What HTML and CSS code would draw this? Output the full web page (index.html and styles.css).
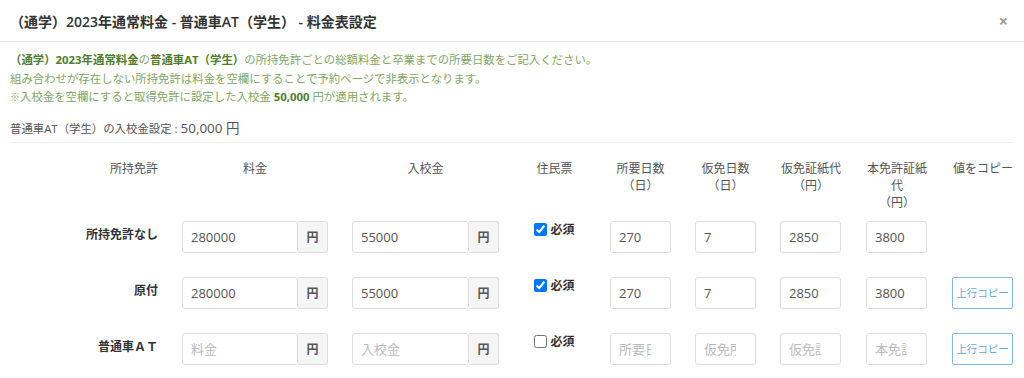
FILE: index.html
```html
<!DOCTYPE html>
<html lang="ja">
<head>
    <meta charset="UTF-8">
    <meta name="viewport" content="width=device-width, initial-scale=1.0">
    <title>料金表設定</title>
    <link rel="stylesheet" href="styles.css">
</head>
<body>
    <div class="modal">
        <div class="modal-header">
            <h4 class="modal-title">（通学）2023年通常料金 - 普通車AT（学生） - 料金表設定</h4>
            <span class="close">×</span>
        </div>

        <div class="modal-body">
            <p class="note">
                <strong>（通学）2023年通常料金</strong>の<strong>普通車AT（学生）</strong>の所持免許ごとの総額料金と卒業までの所要日数をご記入ください。<br>
                組み合わせが存在しない所持免許は料金を空欄にすることで予約ページで非表示となります。<br>
                <span class="kome">※</span>入校金を空欄にすると取得免許に設定した入校金 <strong>50,000</strong> 円が適用されます。
            </p>

            <div class="entry-fee">普通車AT（学生）の入校金設定 : <span class="amount">50,000 円</span></div>

            <table class="fee-table">
                <colgroup>
                    <col style="width: 160px">
                    <col style="width: 170px">
                    <col style="width: 171px">
                    <col style="width: 87px">
                    <col style="width: 85px">
                    <col style="width: 85px">
                    <col style="width: 86px">
                    <col style="width: 86px">
                    <col style="width: 74px">
                </colgroup>
                <thead>
                    <tr>
                        <th class="label-col">所持免許</th>
                        <th>料金</th>
                        <th>入校金</th>
                        <th>住民票</th>
                        <th>所要日数<br>（日）</th>
                        <th>仮免日数<br>（日）</th>
                        <th>仮免証紙代<br>（円）</th>
                        <th>本免許証紙代<br>（円）</th>
                        <th class="last">値をコピー</th>
                    </tr>
                </thead>
                <tbody>
                    <tr>
                        <td class="label-col"><div class="row-label">所持免許なし</div></td>
                        <td><div class="input-group"><input type="text" value="280000" placeholder="料金"><span class="addon">円</span></div></td>
                        <td><div class="input-group"><input type="text" value="55000" placeholder="入校金"><span class="addon">円</span></div></td>
                        <td class="center"><label class="check"><input type="checkbox" checked> 必須</label></td>
                        <td><input type="text" class="small" value="270" placeholder="所要日数"></td>
                        <td><input type="text" class="small" value="7" placeholder="仮免所要日数"></td>
                        <td><input type="text" class="small" value="2850" placeholder="仮免証紙代"></td>
                        <td><input type="text" class="small" value="3800" placeholder="本免証紙代"></td>
                        <td class="last"></td>
                    </tr>
                    <tr>
                        <td class="label-col"><div class="row-label">原付</div></td>
                        <td><div class="input-group"><input type="text" value="280000" placeholder="料金"><span class="addon">円</span></div></td>
                        <td><div class="input-group"><input type="text" value="55000" placeholder="入校金"><span class="addon">円</span></div></td>
                        <td class="center"><label class="check"><input type="checkbox" checked> 必須</label></td>
                        <td><input type="text" class="small" value="270" placeholder="所要日数"></td>
                        <td><input type="text" class="small" value="7" placeholder="仮免所要日数"></td>
                        <td><input type="text" class="small" value="2850" placeholder="仮免証紙代"></td>
                        <td><input type="text" class="small" value="3800" placeholder="本免証紙代"></td>
                        <td class="last"><button type="button" class="copy-btn">上行コピー</button></td>
                    </tr>
                    <tr>
                        <td class="label-col"><div class="row-label">普通車ＡＴ</div></td>
                        <td><div class="input-group"><input type="text" placeholder="料金"><span class="addon">円</span></div></td>
                        <td><div class="input-group"><input type="text" placeholder="入校金"><span class="addon">円</span></div></td>
                        <td class="center"><label class="check"><input type="checkbox"> 必須</label></td>
                        <td><input type="text" class="small" placeholder="所要日数"></td>
                        <td><input type="text" class="small" placeholder="仮免所要日数"></td>
                        <td><input type="text" class="small" placeholder="仮免証紙代"></td>
                        <td><input type="text" class="small" placeholder="本免証紙代"></td>
                        <td class="last"><button type="button" class="copy-btn">上行コピー</button></td>
                    </tr>
                </tbody>
            </table>
        </div>
    </div>
</body>
</html>
```

FILE: styles.css
```css
body {
    margin: 0;
    font-family: "Open Sans", "Noto Sans CJK JP", sans-serif;
    font-size: 12px;
    color: #333;
    background-color: white;
}

.modal {
    width: 1024px;
    overflow: hidden;
}

.modal-header {
    display: flex;
    align-items: center;
    justify-content: space-between;
    height: 42px;
    padding: 0 16px 0 10px;
    border-bottom: 1px solid #e9e9e9;
    box-sizing: border-box;
}

.modal-title {
    margin: 0;
    font-size: 14px;
    font-weight: 600;
    color: #333;
}

.close {
    font-size: 16px;
    font-weight: bold;
    color: #999;
    cursor: pointer;
}

.modal-body {
    padding: 9px 10px 0;
}

.note {
    margin: 0 0 11px;
    font-size: 11.4px;
    line-height: 18.6px;
    color: #7fa763;
}

.note strong {
    color: #4f7d2c;
}

.kome {
    font-size: 10px;
}

.entry-fee {
    padding-bottom: 3px;
    border-bottom: 1px solid #eee;
    font-size: 11.4px;
    color: #555;
    line-height: 20px;
}

.entry-fee .amount {
    font-size: 13.5px;
}

.fee-table {
    width: 1004px;
    margin-top: 9px;
    table-layout: fixed;
    border-collapse: collapse;
}

.fee-table th {
    padding: 8px 12px 4px;
    font-weight: normal;
    color: #555;
    line-height: 17px;
    text-align: center;
    vertical-align: top;
}

.fee-table td {
    padding: 6px 12px 18px;
    vertical-align: top;
}

.fee-table .label-col {
    text-align: right;
}

.fee-table .last {
    padding-right: 0;
}

.fee-table .center {
    text-align: center;
}

.row-label {
    padding-top: 5px;
    font-weight: bold;
    line-height: 17px;
}

.input-group {
    display: flex;
    height: 32px;
}

.input-group input {
    flex: 1;
    min-width: 0;
    border-radius: 3px 0 0 3px;
}

input[type="text"] {
    height: 32px;
    padding: 0 8px;
    border: 1px solid #ddd;
    border-radius: 3px;
    box-sizing: border-box;
    font-family: "Open Sans", "Noto Sans CJK JP", sans-serif;
    font-size: 13px;
    color: #555;
    background-color: white;
}

input[type="text"]::placeholder {
    color: #bbb;
}

input.small {
    width: 61px;
    padding-right: 19px;
}

.addon {
    display: flex;
    align-items: center;
    justify-content: center;
    width: 29px;
    border: 1px solid #ddd;
    border-left: none;
    border-radius: 0 3px 3px 0;
    background-color: #f5f5f5;
    font-weight: bold;
    color: #555;
}

.check {
    display: inline-flex;
    align-items: center;
    gap: 3px;
    font-weight: bold;
    line-height: 17px;
}

.check input {
    margin: 0;
    width: 13px;
    height: 13px;
}

.copy-btn {
    width: 61px;
    height: 32px;
    padding: 0;
    border: 1px solid #7dbbe9;
    border-radius: 2px;
    background-color: white;
    color: #64a9df;
    font-family: "Open Sans", "Noto Sans CJK JP", sans-serif;
    font-size: 10.5px;
    cursor: pointer;
}
```
